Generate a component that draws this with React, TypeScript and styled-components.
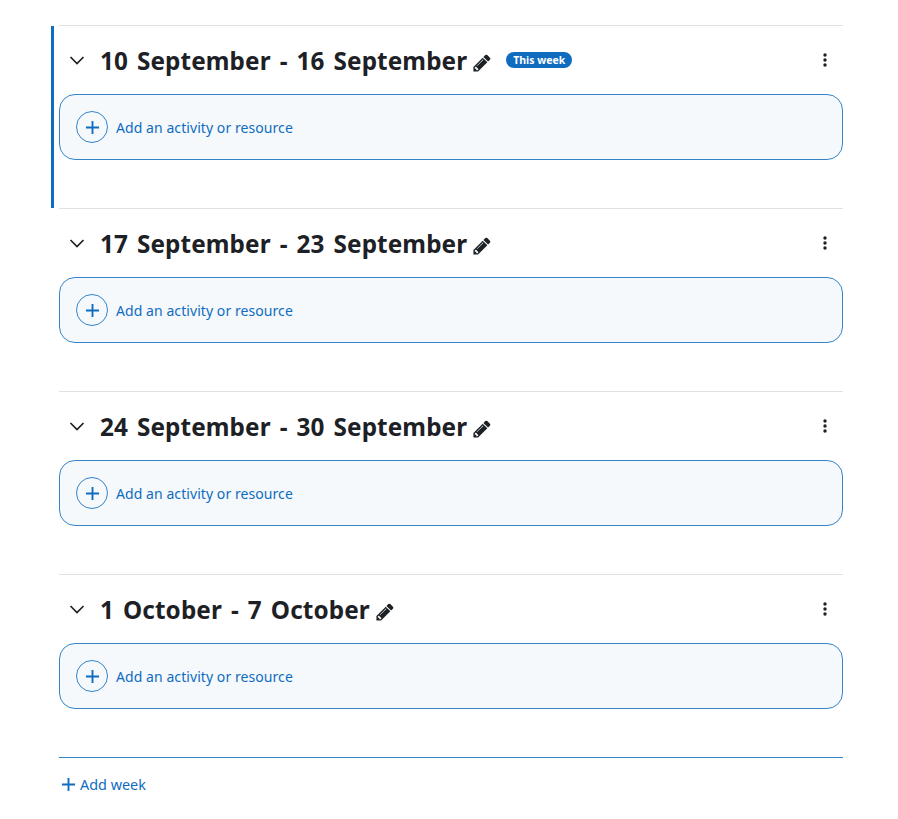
import styled, { createGlobalStyle } from "styled-components";

const GlobalStyle = createGlobalStyle`
  html, body {
    margin: 0;
    padding: 0;
    background: #fff;
    font-family: "Noto Sans", "Open Sans", sans-serif;
  }
`;

const Page = styled.div`
  width: 784px;
  margin-left: 59px;
  padding-top: 25px;
`;

const Section = styled.section<{ $current?: boolean }>`
  position: relative;
  height: 183px;
  box-sizing: border-box;
  border-top: 1px solid #dee2e6;

  ${(p) =>
    p.$current &&
    `
    &::before {
      content: "";
      position: absolute;
      left: -8px;
      top: 0;
      bottom: 0;
      width: 3px;
      background: #0f6cbf;
    }
  `}
`;

const Header = styled.div`
  display: flex;
  align-items: center;
  height: 68px;
  padding-left: 9px;
`;

const Toggle = styled.button`
  display: flex;
  align-items: center;
  justify-content: center;
  width: 17px;
  height: 17px;
  margin-right: 15px;
  padding: 0;
  border: 0;
  background: none;
  color: #1d2125;
`;

const Title = styled.h3`
  margin: 0;
  padding-top: 2px;
  font-size: 24.3px;
  font-weight: 700;
  letter-spacing: 0.1px;
  word-spacing: 2.6px;
  line-height: 32px;
  color: #1d2125;
`;

const EditLink = styled.a`
  display: flex;
  margin-left: 5px;
  margin-top: 5px;
  color: #1d2125;
`;

const Badge = styled.span`
  margin-left: 14px;
  padding: 0 7px;
  height: 16px;
  border-radius: 8px;
  background: #0f6cbf;
  color: #fff;
  font-size: 10.5px;
  font-weight: 700;
  line-height: 16px;
`;

const Menu = styled.button`
  display: flex;
  align-items: center;
  justify-content: center;
  margin-left: auto;
  margin-right: 8px;
  width: 20px;
  height: 20px;
  padding: 0;
  border: 0;
  background: none;
  color: #1d2125;
`;

const ActivityCard = styled.div`
  display: flex;
  align-items: center;
  gap: 8px;
  height: 66px;
  box-sizing: border-box;
  padding-left: 16px;
  border: 1px solid #3584c9;
  border-radius: 16px;
  background: #f5f9fc;
  color: #0f6cbf;
  font-size: 14px;
  letter-spacing: 0.07px;
`;

const PlusCircle = styled.span`
  display: flex;
  align-items: center;
  justify-content: center;
  width: 32px;
  height: 32px;
  box-sizing: border-box;
  border: 1px solid #3584c9;
  border-radius: 50%;
`;

const Footer = styled.div`
  border-top: 1px solid #3584c9;
  height: 52px;
  display: flex;
  align-items: center;
  gap: 4px;
  padding-left: 2px;
  color: #0f6cbf;
  font-size: 14.4px;
`;

const Plus = () => (
  <svg width="15" height="15" viewBox="0 0 16 16" fill="none" stroke="currentColor" strokeWidth="2">
    <path d="M8 1v14M1 8h14" />
  </svg>
);

const Pencil = () => (
  <svg width="20" height="20" viewBox="0 0 1792 1792" fill="currentColor">
    <path d="M491 1536l91-91-235-235-91 91v107h128v128h107zm523-928q0-22-22-22-10 0-17 7l-542 542q-7 7-7 17 0 22 22 22 10 0 17-7l542-542q7-7 7-17zm-54-192l416 416-832 832h-416v-416zm683 96q0 53-37 90l-166 166-416-416 166-165q36-38 90-38 53 0 91 38l235 234q37 39 37 91z" />
  </svg>
);

const weeks = [
  { title: "10 September - 16 September", current: true },
  { title: "17 September - 23 September" },
  { title: "24 September - 30 September" },
  { title: "1 October - 7 October" },
];

export default function App() {
  return (
    <>
      <GlobalStyle />
      <Page>
        {weeks.map((w) => (
          <Section key={w.title} $current={w.current}>
            <Header>
              <Toggle>
                <svg width="16" height="16" viewBox="0 0 16 16" fill="none" stroke="currentColor" strokeWidth="1.7">
                  <path d="M1.5 5l6.5 6.5L14.5 5" />
                </svg>
              </Toggle>
              <Title>{w.title}</Title>
              <EditLink>
                <Pencil />
              </EditLink>
              {w.current && <Badge>This week</Badge>}
              <Menu>
                <svg width="4" height="14" viewBox="0 0 4 14" fill="currentColor">
                  <circle cx="2" cy="2" r="1.7" />
                  <circle cx="2" cy="7" r="1.7" />
                  <circle cx="2" cy="12" r="1.7" />
                </svg>
              </Menu>
            </Header>
            <ActivityCard>
              <PlusCircle>
                <Plus />
              </PlusCircle>
              Add an activity or resource
            </ActivityCard>
          </Section>
        ))}
        <Footer>
          <Plus />
          Add week
        </Footer>
      </Page>
    </>
  );
}
